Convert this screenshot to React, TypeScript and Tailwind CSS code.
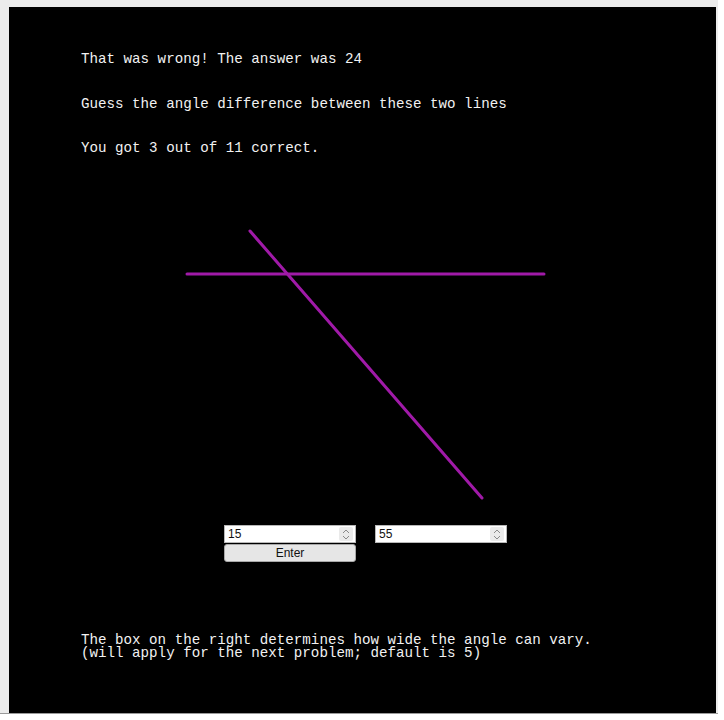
import React from 'react';

const mono = { fontFamily: '"Liberation Mono", "DejaVu Sans Mono", monospace' };

function Spinner() {
  return (
    <div className="flex h-[14px] w-[14px] flex-col items-center justify-center rounded-[2px] bg-[#eaeaea]">
      <svg width="8" height="5" viewBox="0 0 8 5" className="mb-[1px]">
        <path d="M1 4 L4 1 L7 4" fill="none" stroke="#8a8a8a" strokeWidth="1" />
      </svg>
      <svg width="8" height="5" viewBox="0 0 8 5">
        <path d="M1 1 L4 4 L7 1" fill="none" stroke="#8a8a8a" strokeWidth="1" />
      </svg>
    </div>
  );
}

function NumberBox({ value }: { value: string }) {
  return (
    <div className="flex h-[18px] w-[132px] items-center justify-between border border-[#b8b8b8] bg-white pl-[3px] pr-[2px]">
      <span className="text-[12px] leading-none text-[#111]" style={{ fontFamily: '"Liberation Sans", Arial, sans-serif' }}>
        {value}
      </span>
      <Spinner />
    </div>
  );
}

export default function App() {
  return (
    <div className="h-[720px] w-[724px] bg-white">
      <div className="h-[714px] w-[718px] border-b border-[#9a9a9a] bg-[#ececec] pl-[9px] pt-[7px]">
        <div className="h-[706px] w-[707px] bg-black text-[14.2px] text-[#f2f2f2]" style={mono}>
          <div className="flex flex-col gap-[28.5px] pl-[72px] pt-[44px] leading-[16px]">
            <p>That was wrong! The answer was 24</p>
            <p>Guess the angle difference between these two lines</p>
            <p>You got 3 out of 11 correct.</p>
          </div>

          {/* line drawing */}
          <svg width="707" height="369" viewBox="0 0 707 369" className="block">
            <line x1="178" y1="118" x2="535" y2="118" stroke="#a01aa8" strokeWidth="3" strokeLinecap="round" />
            <line x1="241" y1="75" x2="473" y2="342" stroke="#a01aa8" strokeWidth="3" strokeLinecap="round" />
          </svg>

          <div className="flex flex-col gap-[1px] pl-[215px]">
            <div className="flex gap-[19px]">
              <NumberBox value="15" />
              <NumberBox value="55" />
            </div>
            <button
              className="h-[18px] w-[132px] rounded-[3px] border border-[#a8a8a8] bg-[#e6e6e6] text-[12px] leading-none text-[#111]"
              style={{ fontFamily: '"Liberation Sans", Arial, sans-serif' }}
            >
              Enter
            </button>
          </div>

          <div className="mt-[72px] pl-[72px] leading-[13px]">
            <p>The box on the right determines how wide the angle can vary.</p>
            <p>(will apply for the next problem; default is 5)</p>
          </div>
        </div>
      </div>
    </div>
  );
}
